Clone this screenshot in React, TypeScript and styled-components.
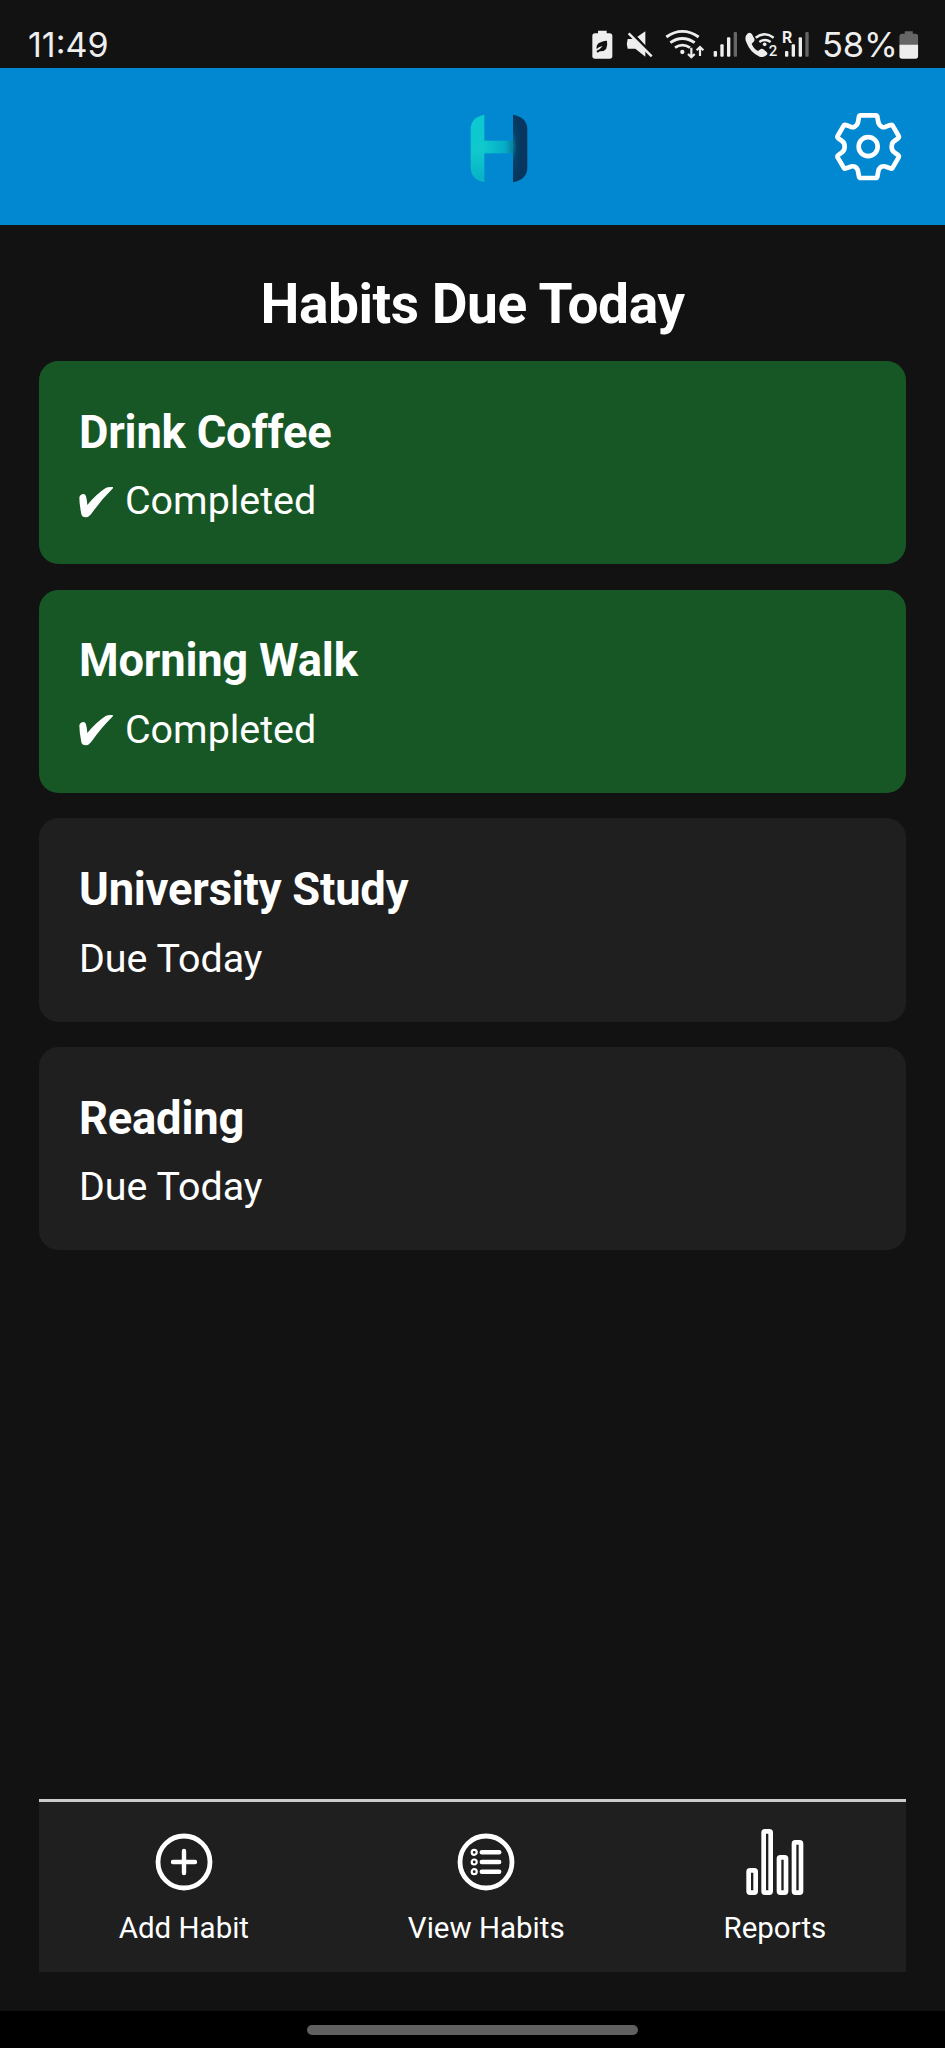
import React from "react";
import styled, { createGlobalStyle } from "styled-components";

const GlobalStyle = createGlobalStyle`
  * { box-sizing: border-box; }
  body { margin: 0; background: #121212; }
  h1, h2, p { margin: 0; }
`;

const Screen = styled.div`
  width: 945px;
  height: 2048px;
  display: flex;
  flex-direction: column;
  background: #121212;
  color: #fff;
  font-family: Roboto, "Liberation Sans", sans-serif;
  overflow: hidden;
`;

const StatusBar = styled.div`
  height: 67.5px;
  flex: none;
  display: flex;
  justify-content: space-between;
  align-items: flex-start;
  padding: 24px 26.5px 0 28px;
  font-family: Inter, Roboto, sans-serif;
  color: #eee;
`;

const Clock = styled.span`
  font-size: 34px;
  line-height: 42px;
  letter-spacing: 0;
`;

const StatusIcons = styled.div`
  display: flex;
  align-items: flex-start;
`;

const Glyph = styled.svg<{ $gap: number }>`
  display: block;
  flex: none;
  height: 30px;
  overflow: visible;
  margin-top: 6px;
  margin-right: ${(p) => p.$gap}px;
`;

const Percent = styled.span`
  width: 75px;
  font-size: 34.5px;
  line-height: 42px;
  letter-spacing: -0.1px;
  white-space: nowrap;
  margin-right: 2px;
`;

const Header = styled.header`
  height: 157.5px;
  flex: none;
  display: flex;
  align-items: flex-start;
  justify-content: space-between;
  padding: 42.5px 41px 0 470px;
  background: #0288d1;
`;

const LogoMark = styled.svg`
  display: block;
  width: 58px;
  height: 69px;
  margin-top: 4px;
`;

const SettingsButton = styled.button`
  padding: 0;
  border: 0;
  background: none;
  display: block;
  svg { display: block; }
`;

const Main = styled.main`
  flex: 1;
  display: flex;
  flex-direction: column;
  padding: 46.5px 39.3px 39px;
`;

const Title = styled.h1`
  font-size: 55.1px;
  line-height: 64px;
  font-weight: 700;
  letter-spacing: -0.48px;
  text-align: center;
  margin-bottom: 25.5px;
`;

const HabitList = styled.div`
  display: flex;
  flex-direction: column;
  gap: 25.4px;
`;

const HabitCard = styled.article<{ $done: boolean }>`
  height: 203.3px;
  padding: 44.6px 39.7px 0;
  border-radius: 19.5px;
  background: ${(p) => (p.$done ? "#175726" : "#1f1f1f")};
`;

const HabitName = styled.h2`
  font-size: 45.3px;
  line-height: 53px;
  font-weight: 700;
  letter-spacing: -0.2px;
`;

const HabitStatus = styled.p`
  display: flex;
  align-items: center;
  margin-top: 19.6px;
  font-size: 39.4px;
  line-height: 46px;
  svg { margin: 2px 11px 0 0; }
`;

const TabBar = styled.nav`
  height: 173px;
  margin-top: auto;
  display: flex;
  justify-content: space-around;
  padding-top: 27px;
  border-top: 3px solid #ccc;
  background: #1f1f1f;
`;

const Tab = styled.div`
  display: flex;
  flex-direction: column;
  align-items: center;
  gap: 16px;
  font-size: 29.5px;
  line-height: 35px;
  svg { display: block; }
`;

const GestureArea = styled.div`
  height: 37px;
  flex: none;
  display: flex;
  justify-content: center;
  padding-top: 14px;
  background: #000;
`;

const GesturePill = styled.div`
  width: 331px;
  height: 10px;
  border-radius: 5px;
  background: #606060;
`;

const habits = [
  { name: "Drink Coffee", done: true },
  { name: "Morning Walk", done: true },
  { name: "University Study", done: false },
  { name: "Reading", done: false },
];

const PowerSaving = () => (
  <Glyph $gap={13} width={21} viewBox="35 60 63 90" fill="#eee">
    <path d="M53 62h26v8h9q8 0 8 8v60q0 8-8 8H44q-8 0-8-8V78q0-8 8-8h9z" />
    <path d="M49 117q-4-22 31-25q5 33-21 32l-7 4-4-5q13-6 19-15q-11 2-18 9z" fill="#121212" />
  </Glyph>
);

const Muted = () => (
  <Glyph $gap={12} width={27} viewBox="137 60 81 90" fill="#eee">
    <path d="M142 87h17l36 36v17l-30-24h-23q-5-14 0-29zM171 80l24-16v42z" />
    <path d="M148 67l69 69" stroke="#121212" strokeWidth="9" />
    <path d="M145 70l69 69" stroke="#eee" strokeWidth="7.5" />
  </Glyph>
);

const Wifi = () => (
  <Glyph $gap={7} width={41} viewBox="252 60 123 90" fill="none" stroke="#eee" strokeWidth="8.5">
    <path d="M256 81q48-34 97 0M268 98q36-25 73 0M282 113q22-15 45 0" />
    <circle cx="304" cy="126" r="6.5" fill="#eee" stroke="none" />
    <path d="M331 113v29M321 132l10 10 10-10M357 138v-26M347 121l10-10 10 10" strokeWidth="6.5" />
  </Glyph>
);

const Signal = () => (
  <Glyph $gap={7} width={25} viewBox="395 60 75 90" fill="#eee">
    <rect x="397" y="123" width="10" height="17" rx="3" />
    <rect x="417" y="103" width="10" height="37" rx="3" />
    <rect x="437" y="82" width="10" height="58" rx="3" />
    <rect x="457" y="66" width="10" height="74" rx="3" fill="#666" />
  </Glyph>
);

const WifiCalling = () => (
  <Glyph $gap={4} width={33} viewBox="-18 60 99 90">
    <path
      d="M-11 71q-10 10-3 26q12 32 40 43q12 4 21-5q5-5-1-10l-9-7q-5-4-11 1l-5 4q-14-8-19-22l6-6q5-5 1-11l-6-11q-5-8-14-2z"
      fill="#eee"
    />
    <g fill="none" stroke="#eee" strokeWidth="7.5">
      <path d="M14 83q27-20 54 0M25 96q17-12 34 0" />
    </g>
    <circle cx="41" cy="103" r="5.5" fill="#eee" />
    <text x="53" y="138" fontFamily="Roboto, sans-serif" fontWeight="500" fontSize="45" fill="#eee" stroke="#121212" strokeWidth="6" paintOrder="stroke">2</text>
  </Glyph>
);

const RoamingSignal = () => (
  <Glyph $gap={12} width={28} viewBox="93 60 84 90" fill="#eee">
    <text x="93" y="98" fontFamily="Roboto, sans-serif" fontWeight="700" fontSize="48">R</text>
    <rect x="102" y="123" width="10" height="17" rx="3" />
    <rect x="122" y="103" width="10" height="37" rx="3" />
    <rect x="143" y="82" width="10" height="58" rx="3" />
    <rect x="163" y="66" width="10" height="74" rx="3" fill="#666" />
  </Glyph>
);

const Battery = () => (
  <Glyph $gap={0} width={19.5} viewBox="447 60 58 90">
    <path d="M464 64h24v7h8q8 0 8 8v26h-56V79q0-8 8-8h8z" fill="#666" />
    <path d="M448 104h56v34q0 8-8 8h-40q-8 0-8-8z" fill="#eee" />
  </Glyph>
);

const Logo = () => (
  <LogoMark viewBox="90 73 174 207">
    <defs>
      <linearGradient id="teal" x1="0" y1="0" x2="0" y2="1">
        <stop offset="0" stopColor="#0cc8d0" />
        <stop offset=".55" stopColor="#10c8cc" />
        <stop offset="1" stopColor="#08b0c6" />
      </linearGradient>
      <linearGradient id="bar" x1="0" y1="0" x2="1" y2="0">
        <stop offset="0" stopColor="#0fc8cd" />
        <stop offset=".7" stopColor="#05abc6" />
        <stop offset="1" stopColor="#067b9b" />
      </linearGradient>
      <radialGradient id="navy" cx="0" cy=".47" r=".55">
        <stop offset="0" stopColor="#087791" />
        <stop offset=".45" stopColor="#064068" />
        <stop offset="1" stopColor="#07375e" />
      </radialGradient>
    </defs>
    <path d="M133 75v203q-41-8-41-45V119q0-36 41-44z" fill="url(#teal)" />
    <path d="M132 153h91v38h-91z" fill="url(#bar)" />
    <path d="M219 75q43 8 43 44v114q0 37-43 45z" fill="url(#navy)" />
  </LogoMark>
);

const Gear = () => (
  <svg width="70.67" height="73.33" viewBox="70 60 212 220" fill="none" stroke="#fff" strokeWidth="14" strokeLinejoin="round">
    <path d="M153 76H198Q202 76 203 80L206 97Q208 106 216 110Q223 114 231 109L242 105Q247 103 249 107L267 138Q269 142 265 145L254 153Q246 158 246 170Q246 182 254 187L265 195Q269 198 267 202L249 233Q247 237 242 235L231 231Q223 227 216 230Q208 234 206 243L203 260Q202 264 198 264H153Q149 264 148 260L145 243Q143 234 135 230Q128 227 120 231L109 235Q104 237 102 233L84 202Q82 198 86 195L97 187Q105 182 105 170Q105 158 97 153L86 145Q82 142 84 138L102 107Q104 103 109 105L120 109Q128 114 135 110Q143 106 145 97L148 80Q149 76 153 76Z" />
    <circle cx="175.5" cy="170" r="28.5" />
  </svg>
);

const Check = () => (
  <svg width="35" height="33" viewBox="180 683 105 99" fill="#fff">
    <path d="M181 717Q182 711 189 708Q198 705 201 714Q204 725 205 740Q232 707 260 689Q267 685 281 686Q284 688 279 693Q247 724 216 768Q209 777 200 777Q189 777 187 767Q181 738 181 717Z" />
  </svg>
);

const AddIcon = () => (
  <svg width="58" height="66" viewBox="-29 -33 58 66" fill="none" stroke="#fff">
    <circle r="26" strokeWidth="4.8" />
    <path d="M-11 0H11M0-11V11" strokeWidth="4.4" strokeLinecap="round" />
  </svg>
);

const ListIcon = () => (
  <svg width="58" height="66" viewBox="-29 -33 58 66" fill="none" stroke="#fff">
    <circle r="26" strokeWidth="4.8" />
    {[-9.7, 0, 9.7].map((y) => (
      <React.Fragment key={y}>
        <circle cx="-11.8" cy={y} r="2.5" strokeWidth="2.2" />
        <path d={`M-4.2 ${y}H13.2`} strokeWidth="4.4" strokeLinecap="round" />
      </React.Fragment>
    ))}
  </svg>
);

const ReportsIcon = () => (
  <svg width="58" height="66" viewBox="168 147 174 198" fill="none" stroke="#fff" strokeWidth="14">
    <rect x="176" y="271" width="21" height="67" rx="4" />
    <rect x="221" y="154" width="21" height="184" rx="4" />
    <rect x="267" y="232" width="21" height="106" rx="4" />
    <rect x="312" y="187" width="21" height="151" rx="4" />
  </svg>
);

export default function App() {
  return (
    <Screen>
      <GlobalStyle />
      <StatusBar>
        <Clock>11:49</Clock>
        <StatusIcons>
          <PowerSaving />
          <Muted />
          <Wifi />
          <Signal />
          <WifiCalling />
          <RoamingSignal />
          <Percent>58%</Percent>
          <Battery />
        </StatusIcons>
      </StatusBar>
      <Header>
        <Logo />
        <SettingsButton aria-label="Settings">
          <Gear />
        </SettingsButton>
      </Header>
      <Main>
        <Title>Habits Due Today</Title>
        <HabitList>
          {habits.map(({ name, done }) => (
            <HabitCard key={name} $done={done}>
              <HabitName>{name}</HabitName>
              <HabitStatus>
                {done && <Check />}
                {done ? "Completed" : "Due Today"}
              </HabitStatus>
            </HabitCard>
          ))}
        </HabitList>
        <TabBar>
          <Tab>
            <AddIcon />
            Add Habit
          </Tab>
          <Tab>
            <ListIcon />
            View Habits
          </Tab>
          <Tab>
            <ReportsIcon />
            Reports
          </Tab>
        </TabBar>
      </Main>
      <GestureArea>
        <GesturePill />
      </GestureArea>
    </Screen>
  );
}
